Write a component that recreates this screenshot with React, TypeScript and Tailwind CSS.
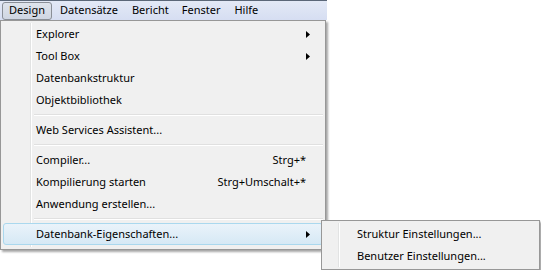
import React from "react";

const font = { fontFamily: '"Noto Sans", "Open Sans", sans-serif' };

function Arrow() {
  return (
    <svg width="4" height="7" viewBox="0 0 4 7" className="block">
      <path d="M0 0 L4 3.5 L0 7 Z" fill="#000" />
    </svg>
  );
}

function Item({ label, shortcut, arrow }: { label: string; shortcut?: string; arrow?: boolean }) {
  return (
    <div className="flex items-center h-[22px] pl-[33px] pr-[13px] text-[11px] text-black">
      <span className="flex-1 whitespace-nowrap">{label}</span>
      {shortcut && <span className="whitespace-nowrap mr-[4px]">{shortcut}</span>}
      {arrow && <Arrow />}
    </div>
  );
}

function Sep() {
  return (
    <div className="h-[8px] flex flex-col justify-center pl-[31px]">
      <div className="h-px bg-[#e0e0e0]" />
      <div className="h-px bg-white" />
    </div>
  );
}

export default function App() {
  return (
    <div className="w-[541px] h-[270px] bg-white relative overflow-hidden" style={font}>
      {/* menu bar */}
      <div className="w-[327px] h-[20px] border-t border-[#5b6778] bg-gradient-to-b from-[#e3e9f6] to-[#d6def2] flex items-center text-[11px] text-black">
        <div className="ml-[2px] h-[18px] w-[50px] flex items-center justify-center rounded-[3px] border border-[#8a8f97] bg-gradient-to-b from-[#dfe4ec] to-[#cfd6e2]">
          Design
        </div>
        <div className="ml-[8px]">Datensätze</div>
        <div className="ml-[14px]">Bericht</div>
        <div className="ml-[13px]">Fenster</div>
        <div className="ml-[14px]">Hilfe</div>
      </div>

      {/* dropdown */}
      <div className="relative w-[329px]">
        <div className="relative w-[326px] h-[230px] border border-[#979797] bg-[#f0f0f0] shadow-[2px_2px_2px_rgba(0,0,0,0.35)] py-[2px] px-[2px]">
          <div className="absolute top-[2px] bottom-[2px] left-[29px] w-px bg-[#e2e3e3]" />
          <div className="absolute top-[2px] bottom-[2px] left-[30px] w-px bg-white" />
          <div className="relative">
            <Item label="Explorer" arrow />
            <Item label="Tool Box" arrow />
            <Item label="Datenbankstruktur" />
            <Item label="Objektbibliothek" />
            <Sep />
            <Item label="Web Services Assistent..." />
            <Sep />
            <Item label="Compiler..." shortcut="Strg+*" />
            <Item label="Kompilierung starten" shortcut="Strg+Umschalt+*" />
            <Item label="Anwendung erstellen..." />
            <Sep />
            <div className="relative h-[22px] rounded-[3px] border border-[#aad8ee] bg-gradient-to-b from-[#eaf3fa] to-[#d6e9f5] flex items-center pl-[32px] pr-[12px] text-[11px] text-black">
              <span className="flex-1 whitespace-nowrap">Datenbank-Eigenschaften...</span>
              <Arrow />
            </div>
          </div>
        </div>
      </div>

      {/* submenu */}
      <div className="absolute left-[321px] top-[220px] w-[219px] h-[50px] border border-[#979797] bg-[#f0f0f0] shadow-[2px_2px_2px_rgba(0,0,0,0.35)] py-[2px] px-[2px]">
        <div className="absolute top-[2px] bottom-[2px] left-[16px] w-px bg-[#e2e3e3]" />
        <div className="absolute top-[2px] bottom-[2px] left-[17px] w-px bg-white" />
        <div className="relative">
          <div className="flex items-center h-[22px] pl-[33px] text-[11px] text-black whitespace-nowrap">Struktur Einstellungen...</div>
          <div className="flex items-center h-[22px] pl-[33px] text-[11px] text-black whitespace-nowrap">Benutzer Einstellungen...</div>
        </div>
      </div>
    </div>
  );
}
